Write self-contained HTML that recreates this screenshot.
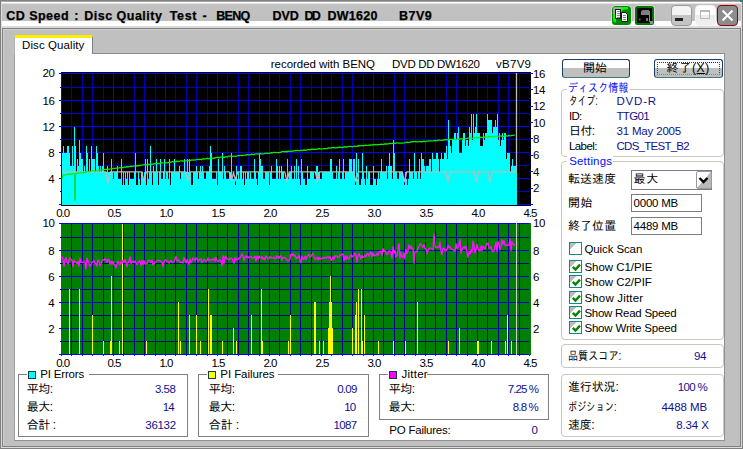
<!DOCTYPE html><html lang="ja"><head><meta charset="utf-8"><title>CD Speed : Disc Quality Test</title><style>
html,body{margin:0;padding:0;background:#c0c0c0;}
body{width:743px;height:449px;overflow:hidden;position:relative;font-family:"Liberation Sans","IPAGothic",sans-serif;font-size:11px;color:#000;}
#win{position:absolute;left:0;top:0;width:743px;height:449px;background:#c0c0c0;overflow:hidden;}
.abs{position:absolute;}
.t{position:absolute;white-space:pre;transform-origin:0 0;line-height:16px;height:16px;font-size:11.5px;}
.t.jp{font-size:12px;}
.t.tb{font-weight:bold;font-size:12.5px;-webkit-text-stroke:0.25px #000;}
.t.ax{font-size:11.5px;}
.t.val{color:#101090;}
.t.blue{color:#0010f0;}
.gb{position:absolute;border:1px solid #c8c8c0;border-radius:4px;box-sizing:border-box;}
.sb{position:absolute;border:1px solid #808080;box-sizing:border-box;}
.mask{position:absolute;background:#fff;}
.sq{position:absolute;width:6px;height:6px;border:1px solid #104040;}
.btn{position:absolute;box-sizing:border-box;border:1px solid #1c3c6c;border-bottom-color:#407878;border-radius:3px;background:linear-gradient(#fff 0,#fff 50%,#c0c0c0 50%,#c0c0c0 100%);}
.inp{position:absolute;box-sizing:border-box;border:1px solid #7c7c7c;background:#fff;}
.cb{position:absolute;width:13px;height:13px;box-sizing:border-box;border:1px solid #148888;background:linear-gradient(135deg,#bcbcbc 0,#bcbcbc 30%,#fff 31%);}
.cb svg{position:absolute;left:1px;top:1px;}
</style></head><body><div id="win">
<div class="abs" style="left:0;top:0;width:743px;height:449px;box-sizing:border-box;border:1px solid #808080;"></div>
<div class="abs" style="left:1px;top:1px;width:741px;height:447px;box-sizing:border-box;border:1px solid #dcdcdc;border-top-color:#a8a8a8;"></div>
<div class="abs" id="titlebar" style="left:2px;top:2px;width:739px;height:26px;background:linear-gradient(#fff 0,#fff 1px,#e4e4e4 1px,#e4e4e4 2px,#c2c2c2 2px,#c0c0c0 19px,#fff 19px,#fff 24px,#dadcda 24px,#dadcda 26px);"></div>
<div class="abs" style="left:2px;top:28px;width:739px;height:419px;box-sizing:border-box;border:1px solid #808080;background:#c0c0c0;"></div>
<div class="abs" style="left:3px;top:29px;width:737px;height:417px;box-sizing:border-box;border:1px solid #d0d0d0;border-right-color:#c0c0c0;border-bottom-color:#c0c0c0;"></div>
<svg class="abs" style="left:611px;top:5px" width="21" height="21" viewBox="0 0 21 21"><rect x="0.5" y="0.5" width="20" height="20" rx="4" fill="#f4f4f4"/><rect x="1" y="1" width="19" height="19" rx="3.5" fill="#008800"/><path d="M2,3.5 Q2,2 3.5,2 H17 L17,4 L12,5 L5,13 L5,18 L2,16 Z" fill="#10f010"/><path d="M2.5,2.500 H11 L11,4.500 H5 V9 H2.500 Z" fill="#a8a8a8"/><rect x="4.500" y="4.500" width="5" height="9" fill="#f0f0f0" stroke="#181818"/><path d="M6,6.500h3M6,8.500h3M6,10.500h3M6,12.500h3" stroke="#8a8a8a"/><path d="M10.500,7.500 H14.500 L16.500,9.500 V16.500 H10.500 Z" fill="#f4f4f4" stroke="#181818"/><path d="M12,10.500h3M12,12.500h3M12,14.500h3" stroke="#8a8a8a"/></svg>
<svg class="abs" style="left:634px;top:5px" width="21" height="21" viewBox="0 0 21 21"><rect x="0.5" y="0.5" width="20" height="20" rx="3" fill="#ececec"/><rect x="1" y="1" width="19" height="19" rx="2.5" fill="#007800"/><rect x="3" y="3" width="15" height="15" fill="#000"/><path d="M7,10 V7 Q7,5 9,5 H15 V10 Z" fill="#808080"/><path d="M15.500,6 V17" stroke="#8c8c8c"/><rect x="5" y="13.500" width="1.500" height="2" fill="#707070"/><rect x="12" y="13" width="2" height="3" fill="#787878"/><rect x="16" y="16" width="3" height="3" fill="#909090"/></svg>
<div class="abs" style="left:671px;top:5px;width:21px;height:21px;box-sizing:border-box;border:1px solid #9a9a9a;border-radius:4px;background:linear-gradient(#f4f4f4 0,#f4f4f4 45%,#c4c4c4 45%);"></div>
<div class="abs" style="left:675px;top:18px;width:8px;height:3px;background:#202020;"></div>
<div class="abs" style="left:695px;top:5px;width:21px;height:21px;box-sizing:border-box;border:1px solid #f4f4f4;border-radius:4px;background:linear-gradient(#fdfdfd 0,#fdfdfd 45%,#ebebeb 45%,#f0f0f0);"></div>
<div class="abs" style="left:700px;top:10px;width:10px;height:9px;box-sizing:border-box;border:1px solid #b8b8b8;border-top-width:2px;"></div>
<div class="abs" style="left:717px;top:5px;width:21px;height:21px;box-sizing:border-box;border:1px solid #900010;border-radius:4px;background:#8c8c8c;"></div>
<svg class="abs" style="left:717px;top:5px" width="21" height="21" viewBox="0 0 21 21"><path d="M5.500,5.500 L15.500,15.500 M15.500,5.500 L5.500,15.500" stroke="#fff" stroke-width="2"/></svg>
<div class="abs" style="left:740px;top:0;width:3px;height:2px;background:#208080;"></div>
<div class="abs" id="page" style="left:14px;top:53px;width:711px;height:388px;box-sizing:border-box;background:#fff;border:1px solid #909090;border-left-color:#a0a0a0;border-top-color:#8c8c8c;"></div>
<div class="abs" id="tab" style="left:14px;top:35px;width:79px;height:19px;box-sizing:border-box;background:#fff;border-left:1px solid #b0b0b0;border-right:1px solid #808080;border-top:3px solid #ffee00;border-radius:2px 2px 0 0;"></div>
<svg id="charts" width="743" height="449" viewBox="0 0 743 449" style="position:absolute;left:0;top:0">
<g shape-rendering="crispEdges">
<rect x="61" y="72" width="470" height="133" fill="#000"/>
<rect x="61" y="73" width="1" height="132" fill="#0000ff"/>
<rect x="71" y="73" width="1" height="132" fill="#0000b0"/>
<rect x="82" y="73" width="1" height="132" fill="#0000b0"/>
<rect x="92" y="73" width="1" height="132" fill="#0000b0"/>
<rect x="103" y="73" width="1" height="132" fill="#0000b0"/>
<rect x="113" y="73" width="1" height="132" fill="#0000ff"/>
<rect x="123" y="73" width="1" height="132" fill="#0000b0"/>
<rect x="134" y="73" width="1" height="132" fill="#0000b0"/>
<rect x="144" y="73" width="1" height="132" fill="#0000b0"/>
<rect x="155" y="73" width="1" height="132" fill="#0000b0"/>
<rect x="165" y="73" width="1" height="132" fill="#0000ff"/>
<rect x="175" y="73" width="1" height="132" fill="#0000b0"/>
<rect x="186" y="73" width="1" height="132" fill="#0000b0"/>
<rect x="196" y="73" width="1" height="132" fill="#0000b0"/>
<rect x="207" y="73" width="1" height="132" fill="#0000b0"/>
<rect x="217" y="73" width="1" height="132" fill="#0000ff"/>
<rect x="227" y="73" width="1" height="132" fill="#0000b0"/>
<rect x="238" y="73" width="1" height="132" fill="#0000b0"/>
<rect x="248" y="73" width="1" height="132" fill="#0000b0"/>
<rect x="259" y="73" width="1" height="132" fill="#0000b0"/>
<rect x="269" y="73" width="1" height="132" fill="#0000ff"/>
<rect x="279" y="73" width="1" height="132" fill="#0000b0"/>
<rect x="290" y="73" width="1" height="132" fill="#0000b0"/>
<rect x="300" y="73" width="1" height="132" fill="#0000b0"/>
<rect x="311" y="73" width="1" height="132" fill="#0000b0"/>
<rect x="321" y="73" width="1" height="132" fill="#0000ff"/>
<rect x="331" y="73" width="1" height="132" fill="#0000b0"/>
<rect x="342" y="73" width="1" height="132" fill="#0000b0"/>
<rect x="352" y="73" width="1" height="132" fill="#0000b0"/>
<rect x="363" y="73" width="1" height="132" fill="#0000b0"/>
<rect x="373" y="73" width="1" height="132" fill="#0000ff"/>
<rect x="383" y="73" width="1" height="132" fill="#0000b0"/>
<rect x="394" y="73" width="1" height="132" fill="#0000b0"/>
<rect x="404" y="73" width="1" height="132" fill="#0000b0"/>
<rect x="415" y="73" width="1" height="132" fill="#0000b0"/>
<rect x="425" y="73" width="1" height="132" fill="#0000ff"/>
<rect x="435" y="73" width="1" height="132" fill="#0000b0"/>
<rect x="446" y="73" width="1" height="132" fill="#0000b0"/>
<rect x="456" y="73" width="1" height="132" fill="#0000b0"/>
<rect x="467" y="73" width="1" height="132" fill="#0000b0"/>
<rect x="477" y="73" width="1" height="132" fill="#0000ff"/>
<rect x="487" y="73" width="1" height="132" fill="#0000b0"/>
<rect x="498" y="73" width="1" height="132" fill="#0000b0"/>
<rect x="508" y="73" width="1" height="132" fill="#0000b0"/>
<rect x="519" y="73" width="1" height="132" fill="#0000b0"/>
<rect x="59" y="204" width="470" height="1" fill="#0000ff"/>
<rect x="60" y="191" width="469" height="1" fill="#0000c8"/>
<rect x="59" y="178" width="470" height="1" fill="#0000ff"/>
<rect x="60" y="165" width="469" height="1" fill="#0000c8"/>
<rect x="59" y="152" width="470" height="1" fill="#0000ff"/>
<rect x="60" y="139" width="469" height="1" fill="#0000c8"/>
<rect x="59" y="126" width="470" height="1" fill="#0000ff"/>
<rect x="60" y="113" width="469" height="1" fill="#0000c8"/>
<rect x="59" y="100" width="470" height="1" fill="#0000ff"/>
<rect x="60" y="87" width="469" height="1" fill="#0000c8"/>
<rect x="59" y="73" width="470" height="1" fill="#0000ff"/>
<rect x="529" y="204" width="4" height="1" fill="#0000ff"/>
<rect x="529" y="196" width="2" height="1" fill="#0000ff"/>
<rect x="529" y="188" width="4" height="1" fill="#0000ff"/>
<rect x="529" y="179" width="2" height="1" fill="#0000ff"/>
<rect x="529" y="171" width="4" height="1" fill="#0000ff"/>
<rect x="529" y="163" width="2" height="1" fill="#0000ff"/>
<rect x="529" y="155" width="4" height="1" fill="#0000ff"/>
<rect x="529" y="147" width="2" height="1" fill="#0000ff"/>
<rect x="529" y="138" width="4" height="1" fill="#0000ff"/>
<rect x="529" y="130" width="2" height="1" fill="#0000ff"/>
<rect x="529" y="122" width="4" height="1" fill="#0000ff"/>
<rect x="529" y="114" width="2" height="1" fill="#0000ff"/>
<rect x="529" y="106" width="4" height="1" fill="#0000ff"/>
<rect x="529" y="98" width="2" height="1" fill="#0000ff"/>
<rect x="529" y="89" width="4" height="1" fill="#0000ff"/>
<rect x="529" y="81" width="2" height="1" fill="#0000ff"/>
<rect x="529" y="73" width="4" height="1" fill="#0000ff"/>
<path d="M62,204.5V152.5h1V146.0h1V152.5h1V152.5h1V152.5h1V146.0h1V146.0h1V152.5h1V165.5h1V165.5h1V146.0h1V165.5h1V126.5h1V146.0h1V172.0h1V159.0h1V165.5h1V139.5h1V152.5h1V159.0h1V159.0h1V172.0h1V165.5h1V172.0h1V146.0h1V152.5h1V172.0h1V159.0h1V172.0h1V146.0h1V159.0h1V159.0h1V159.0h1V172.0h1V146.0h1V152.5h1V165.5h1V172.0h1V165.5h1V172.0h1V165.5h1V152.5h1V172.0h1V172.0h1V172.0h1V165.5h1V172.0h1V172.0h1V172.0h1V159.0h1V172.0h1V178.5h1V172.0h1V172.0h1V172.0h1V165.5h1V178.5h1V178.5h1V178.5h1V159.0h1V185.0h1V172.0h1V185.0h1V172.0h1V178.5h1V172.0h1V185.0h1V172.0h1V178.5h1V178.5h1V178.5h1V178.5h1V172.0h1V152.5h1V185.0h1V185.0h1V172.0h1V178.5h1V185.0h1V172.0h1V172.0h1V178.5h1V172.0h1V159.0h1V185.0h1V159.0h1V178.5h1V172.0h1V146.0h1V172.0h1V185.0h1V165.5h1V172.0h1V172.0h1V159.0h1V172.0h1V185.0h1V172.0h1V159.0h1V178.5h1V178.5h1V172.0h1V159.0h1V178.5h1V172.0h1V172.0h1V178.5h1V159.0h1V185.0h1V172.0h1V172.0h1V172.0h1V159.0h1V172.0h1V172.0h1V172.0h1V172.0h1V165.5h1V178.5h1V172.0h1V172.0h1V172.0h1V159.0h1V172.0h1V172.0h1V159.0h1V172.0h1V159.0h1V172.0h1V185.0h1V185.0h1V172.0h1V172.0h1V172.0h1V165.5h1V172.0h1V178.5h1V172.0h1V165.5h1V172.0h1V165.5h1V172.0h1V178.5h1V178.5h1V172.0h1V172.0h1V172.0h1V165.5h1V146.0h1V152.5h1V178.5h1V178.5h1V178.5h1V178.5h1V172.0h1V185.0h1V159.0h1V172.0h1V172.0h1V172.0h1V152.5h1V178.5h1V165.5h1V172.0h1V178.5h1V178.5h1V178.5h1V172.0h1V172.0h1V152.5h1V178.5h1V178.5h1V178.5h1V185.0h1V165.5h1V178.5h1V172.0h1V178.5h1V165.5h1V165.5h1V178.5h1V172.0h1V185.0h1V172.0h1V178.5h1V172.0h1V172.0h1V178.5h1V172.0h1V178.5h1V178.5h1V178.5h1V159.0h1V172.0h1V178.5h1V185.0h1V172.0h1V152.5h1V159.0h1V165.5h1V165.5h1V178.5h1V178.5h1V172.0h1V172.0h1V172.0h1V172.0h1V185.0h1V172.0h1V165.5h1V178.5h1V178.5h1V178.5h1V178.5h1V159.0h1V165.5h1V178.5h1V165.5h1V178.5h1V165.5h1V172.0h1V172.0h1V178.5h1V178.5h1V178.5h1V159.0h1V178.5h1V172.0h1V172.0h1V165.5h1V178.5h1V178.5h1V165.5h1V178.5h1V159.0h1V178.5h1V165.5h1V178.5h1V185.0h1V159.0h1V172.0h1V178.5h1V178.5h1V185.0h1V185.0h1V165.5h1V178.5h1V178.5h1V172.0h1V172.0h1V172.0h1V172.0h1V178.5h1V178.5h1V165.5h1V165.5h1V172.0h1V172.0h1V178.5h1V178.5h1V172.0h1V172.0h1V172.0h1V172.0h1V172.0h1V172.0h1V172.0h1V172.0h1V159.0h1V159.0h1V172.0h1V178.5h1V178.5h1V178.5h1V165.5h1V178.5h1V172.0h1V159.0h1V178.5h1V178.5h1V172.0h1V159.0h1V178.5h1V172.0h1V172.0h1V172.0h1V172.0h1V159.0h1V159.0h1V159.0h1V172.0h1V159.0h1V159.0h1V185.0h1V152.5h1V178.5h1V159.0h1V185.0h1V185.0h1V178.5h1V152.5h1V172.0h1V178.5h1V185.0h1V165.5h1V178.5h1V172.0h1V172.0h1V185.0h1V185.0h1V185.0h1V165.5h1V178.5h1V178.5h1V185.0h1V178.5h1V172.0h1V178.5h1V172.0h1V159.0h1V172.0h1V172.0h1V172.0h1V172.0h1V165.5h1V178.5h1V165.5h1V152.5h1V165.5h1V165.5h1V178.5h1V139.5h1V152.5h1V172.0h1V172.0h1V178.5h1V178.5h1V172.0h1V172.0h1V172.0h1V172.0h1V178.5h1V185.0h1V172.0h1V178.5h1V185.0h1V178.5h1V159.0h1V172.0h1V172.0h1V172.0h1V178.5h1V152.5h1V172.0h1V172.0h1V178.5h1V172.0h1V159.0h1V178.5h1V152.5h1V159.0h1V159.0h1V165.5h1V172.0h1V165.5h1V165.5h1V165.5h1V159.0h1V159.0h1V172.0h1V152.5h1V159.0h1V159.0h1V159.0h1V152.5h1V152.5h1V159.0h1V172.0h1V159.0h1V152.5h1V159.0h1V159.0h1V152.5h1V152.5h1V146.0h1V159.0h1V120.0h1V139.5h1V146.0h1V152.5h1V139.5h1V139.5h1V133.0h1V133.0h1V139.5h1V133.0h1V126.5h1V152.5h1V152.5h1V152.5h1V139.5h1V133.0h1V133.0h1V146.0h1V139.5h1V139.5h1V146.0h1V126.5h1V133.0h1V113.5h1V139.5h1V113.5h1V133.0h1V126.5h1V113.5h1V133.0h1V133.0h1V133.0h1V146.0h1V146.0h1V146.0h1V133.0h1V139.5h1V133.0h1V133.0h1V113.5h1V120.0h1V120.0h1V120.0h1V120.0h1V133.0h1V126.5h1V126.5h1V120.0h1V126.5h1V113.5h1V139.5h1V133.0h1V146.0h1V139.5h1V133.0h1V139.5h1V133.0h1V133.0h1V159.0h1V152.5h1V152.5h1V152.5h1V172.0h1V165.5h1V159.0h1V165.5h1V165.5h1V165.5h1V165.5h1V204.5Z" fill="#00ffff"/>
</g>
<path d="M62,171.8 L105.8,171.8 L108,183.2 L110.2,171.8 L141.8,171.8 L144,181.8 L146.2,171.8 L185.8,171.8 L188,180.8 L190.2,171.8 L229.3,171.8 L231.5,180.8 L233.7,171.8 L233.3,171.8 L235.5,179.8 L237.7,171.8 L284.8,171.8 L287,181.8 L289.2,171.8 L315.3,171.8 L317.5,181.8 L319.7,171.8 L353.8,171.8 L356,182.2 L358.2,171.8 L402.3,171.8 L404.5,182.2 L406.7,171.8 L445.8,171.8 L448,182.2 L450.2,171.8 L474.3,171.8 L476.5,182.2 L478.7,171.8 L487.8,171.8 L490,182.2 L492.2,171.8 L516.5,171.8 L516.5,73" fill="none" stroke="#bcbcbc" stroke-width="1.3"/>
<path d="M62,178.7 L63,175.4 L64,174.7 L65,175.2 L66,174.7 L67,174.5 L68,174.2 L69,174.3 L70,173.9 L71,174.4 L72,173.8 L73,173.4 L74,174.0 L75,173.9 L76,173.3 L77,173.3 L78,172.9 L79,173.2 L80,172.8 L81,172.5 L82,172.7 L83,172.7 L84,172.6 L85,172.4 L86,172.2 L87,171.7 L88,171.7 L89,171.6 L90,171.6 L91,171.1 L92,170.9 L93,170.7 L94,171.0 L95,171.1 L96,171.0 L97,170.9 L98,170.5 L99,170.0 L100,170.1 L101,169.8 L102,170.0 L103,169.6 L104,169.8 L105,169.3 L106,169.7 L107,169.1 L108,169.4 L109,169.0 L110,169.0 L111,168.9 L112,168.5 L113,168.6 L114,168.3 L115,168.5 L116,168.1 L117,168.1 L118,168.1 L119,167.9 L120,167.5 L121,168.0 L122,167.7 L123,167.7 L124,167.2 L125,167.2 L126,167.1 L127,166.5 L128,167.2 L129,166.5 L130,166.4 L131,166.1 L132,166.5 L133,166.0 L134,166.0 L135,165.7 L136,165.5 L137,166.1 L138,165.4 L139,165.9 L140,165.2 L141,165.3 L142,165.0 L143,164.9 L144,164.6 L145,164.6 L146,165.1 L147,164.7 L148,164.9 L149,164.1 L150,164.5 L151,164.1 L152,164.4 L153,164.2 L154,163.6 L155,163.8 L156,163.4 L157,163.5 L158,163.5 L159,163.5 L160,163.5 L161,163.2 L162,162.9 L163,163.0 L164,162.8 L165,163.0 L166,162.7 L167,162.8 L168,162.8 L169,162.2 L170,162.5 L171,162.2 L172,161.6 L173,161.5 L174,162.1 L175,162.0 L176,161.6 L177,161.2 L178,161.6 L179,161.3 L180,161.0 L181,160.9 L182,160.8 L183,161.1 L184,161.0 L185,160.9 L186,160.8 L187,160.7 L188,160.5 L189,160.6 L190,160.4 L191,160.3 L192,159.7 L193,160.2 L194,160.2 L195,159.9 L196,159.8 L197,159.5 L198,159.3 L199,159.7 L200,159.3 L201,159.5 L202,159.5 L203,158.6 L204,159.1 L205,158.8 L206,158.8 L207,158.3 L208,158.7 L209,158.8 L210,158.2 L211,157.9 L212,158.4 L213,158.4 L214,157.9 L215,158.1 L216,157.6 L217,157.4 L218,157.4 L219,157.9 L220,157.2 L221,157.1 L222,157.3 L223,157.5 L224,157.1 L225,157.3 L226,156.4 L227,157.1 L228,156.4 L229,156.2 L230,156.2 L231,156.1 L232,156.3 L233,156.3 L234,156.0 L235,156.3 L236,156.3 L237,155.8 L238,155.7 L239,155.7 L240,155.3 L241,155.3 L242,155.7 L243,155.3 L244,155.1 L245,155.2 L246,155.2 L247,154.5 L248,154.7 L249,154.8 L250,155.0 L251,154.4 L252,154.2 L253,154.5 L254,154.7 L255,154.0 L256,153.9 L257,153.9 L258,154.1 L259,154.0 L260,153.4 L261,153.8 L262,153.9 L263,153.9 L264,153.8 L265,153.3 L266,153.4 L267,153.0 L268,153.4 L269,153.4 L270,153.2 L271,152.6 L272,152.9 L273,152.6 L274,152.3 L275,152.3 L276,152.7 L277,152.5 L278,152.6 L279,152.5 L280,152.5 L281,152.1 L282,151.7 L283,151.6 L284,151.5 L285,151.9 L286,151.3 L287,151.9 L288,151.1 L289,151.5 L290,151.2 L291,151.1 L292,151.5 L293,150.9 L294,150.8 L295,150.6 L296,150.7 L297,150.4 L298,150.5 L299,150.5 L300,150.7 L301,150.4 L302,150.3 L303,150.6 L304,149.8 L305,150.4 L306,150.1 L307,150.2 L308,149.5 L309,149.5 L310,149.9 L311,149.3 L312,149.2 L313,149.3 L314,149.2 L315,149.4 L316,149.3 L317,149.2 L318,148.8 L319,148.7 L320,148.8 L321,149.0 L322,148.9 L323,148.8 L324,148.7 L325,148.5 L326,148.7 L327,148.8 L328,147.9 L329,148.2 L330,148.2 L331,147.9 L332,147.7 L333,147.6 L334,147.6 L335,147.8 L336,148.0 L337,147.7 L338,147.6 L339,147.2 L340,147.4 L341,147.2 L342,147.6 L343,147.4 L344,146.7 L345,147.1 L346,146.7 L347,147.2 L348,146.5 L349,146.4 L350,146.5 L351,146.3 L352,146.8 L353,146.7 L354,146.2 L355,146.1 L356,146.5 L357,146.4 L358,145.7 L359,146.1 L360,145.6 L361,145.5 L362,145.6 L363,145.5 L364,145.8 L365,145.2 L366,145.3 L367,145.5 L368,145.4 L369,145.1 L370,144.8 L371,145.1 L372,145.2 L373,144.5 L374,144.8 L375,144.7 L376,144.6 L377,144.8 L378,144.6 L379,144.7 L380,144.5 L381,144.2 L382,144.4 L383,144.3 L384,144.2 L385,143.8 L386,144.2 L387,143.7 L388,144.2 L389,143.4 L390,143.3 L391,143.6 L392,143.5 L393,143.3 L394,143.1 L395,143.5 L396,143.2 L397,142.9 L398,142.9 L399,143.1 L400,143.1 L401,143.0 L402,143.1 L403,142.9 L404,143.0 L405,142.8 L406,142.4 L407,142.1 L408,142.6 L409,142.3 L410,142.4 L411,141.8 L412,141.8 L413,141.7 L414,141.7 L415,141.7 L416,141.6 L417,142.0 L418,141.9 L419,141.5 L420,141.6 L421,141.6 L422,141.8 L423,141.4 L424,141.2 L425,141.6 L426,141.5 L427,141.0 L428,141.2 L429,140.9 L430,140.9 L431,140.9 L432,140.9 L433,141.0 L434,140.7 L435,140.3 L436,140.7 L437,140.8 L438,140.1 L439,140.1 L440,140.2 L441,140.5 L442,140.4 L443,139.9 L444,140.1 L445,139.6 L446,139.4 L447,140.1 L448,139.4 L449,139.3 L450,139.4 L451,139.4 L452,139.3 L453,139.3 L454,139.3 L455,139.5 L456,139.5 L457,139.4 L458,139.4 L459,139.2 L460,139.1 L461,138.5 L462,139.1 L463,138.6 L464,138.5 L465,138.8 L466,138.5 L467,138.4 L468,138.2 L469,138.1 L470,138.3 L471,138.0 L472,138.1 L473,138.4 L474,137.8 L475,137.5 L476,137.6 L477,137.8 L478,137.6 L479,137.7 L480,137.6 L481,137.1 L482,137.8 L483,137.2 L484,137.6 L485,136.8 L486,137.4 L487,137.0 L488,137.3 L489,136.6 L490,136.6 L491,136.5 L492,137.0 L493,137.1 L494,136.5 L495,136.4 L496,136.4 L497,136.1 L498,136.0 L499,136.5 L500,135.9 L501,135.9 L502,136.5 L503,136.1 L504,136.3 L505,135.6 L506,135.6 L507,136.1 L508,136.0 L509,135.4 L510,135.9 L511,135.7 L512,135.4 L513,135.5 L514,135.1 L515,135.0" fill="none" stroke="#08f000" stroke-width="1.25" stroke-linejoin="round"/>
<path d="M75,174 V200.7" fill="none" stroke="#00dd00" stroke-width="1.5"/>
<g shape-rendering="crispEdges">
<rect x="61" y="223" width="470" height="132" fill="#008000"/>
<rect x="71" y="223" width="1" height="132" fill="#000088"/>
<rect x="82" y="223" width="1" height="132" fill="#000088"/>
<rect x="92" y="223" width="1" height="132" fill="#000088"/>
<rect x="103" y="223" width="1" height="132" fill="#000088"/>
<rect x="113" y="223" width="1" height="132" fill="#0000e0"/>
<rect x="123" y="223" width="1" height="132" fill="#000088"/>
<rect x="134" y="223" width="1" height="132" fill="#000088"/>
<rect x="144" y="223" width="1" height="132" fill="#000088"/>
<rect x="155" y="223" width="1" height="132" fill="#000088"/>
<rect x="165" y="223" width="1" height="132" fill="#0000e0"/>
<rect x="175" y="223" width="1" height="132" fill="#000088"/>
<rect x="186" y="223" width="1" height="132" fill="#000088"/>
<rect x="196" y="223" width="1" height="132" fill="#000088"/>
<rect x="207" y="223" width="1" height="132" fill="#000088"/>
<rect x="217" y="223" width="1" height="132" fill="#0000e0"/>
<rect x="227" y="223" width="1" height="132" fill="#000088"/>
<rect x="238" y="223" width="1" height="132" fill="#000088"/>
<rect x="248" y="223" width="1" height="132" fill="#000088"/>
<rect x="259" y="223" width="1" height="132" fill="#000088"/>
<rect x="269" y="223" width="1" height="132" fill="#0000e0"/>
<rect x="279" y="223" width="1" height="132" fill="#000088"/>
<rect x="290" y="223" width="1" height="132" fill="#000088"/>
<rect x="300" y="223" width="1" height="132" fill="#000088"/>
<rect x="311" y="223" width="1" height="132" fill="#000088"/>
<rect x="321" y="223" width="1" height="132" fill="#0000e0"/>
<rect x="331" y="223" width="1" height="132" fill="#000088"/>
<rect x="342" y="223" width="1" height="132" fill="#000088"/>
<rect x="352" y="223" width="1" height="132" fill="#000088"/>
<rect x="363" y="223" width="1" height="132" fill="#000088"/>
<rect x="373" y="223" width="1" height="132" fill="#0000e0"/>
<rect x="383" y="223" width="1" height="132" fill="#000088"/>
<rect x="394" y="223" width="1" height="132" fill="#000088"/>
<rect x="404" y="223" width="1" height="132" fill="#000088"/>
<rect x="415" y="223" width="1" height="132" fill="#000088"/>
<rect x="425" y="223" width="1" height="132" fill="#0000e0"/>
<rect x="435" y="223" width="1" height="132" fill="#000088"/>
<rect x="446" y="223" width="1" height="132" fill="#000088"/>
<rect x="456" y="223" width="1" height="132" fill="#000088"/>
<rect x="467" y="223" width="1" height="132" fill="#000088"/>
<rect x="477" y="223" width="1" height="132" fill="#0000e0"/>
<rect x="487" y="223" width="1" height="132" fill="#000088"/>
<rect x="498" y="223" width="1" height="132" fill="#000088"/>
<rect x="508" y="223" width="1" height="132" fill="#000088"/>
<rect x="519" y="223" width="1" height="132" fill="#000088"/>
<rect x="59" y="354" width="470" height="1" fill="#0000ff"/>
<rect x="60" y="341" width="469" height="1" fill="#000090"/>
<rect x="59" y="328" width="470" height="1" fill="#0000e8"/>
<rect x="60" y="315" width="469" height="1" fill="#000090"/>
<rect x="59" y="302" width="470" height="1" fill="#0000e8"/>
<rect x="60" y="289" width="469" height="1" fill="#000090"/>
<rect x="59" y="276" width="470" height="1" fill="#0000e8"/>
<rect x="60" y="263" width="469" height="1" fill="#000090"/>
<rect x="59" y="250" width="470" height="1" fill="#0000e8"/>
<rect x="60" y="237" width="469" height="1" fill="#000090"/>
<rect x="59" y="223" width="470" height="1" fill="#0000ff"/>
<rect x="61" y="205" width="470" height="1" fill="#000"/>
<rect x="61" y="205" width="1" height="1" fill="#000070"/>
<rect x="61" y="355" width="1" height="1" fill="#2020ff"/>
<rect x="71" y="205" width="1" height="1" fill="#000070"/>
<rect x="71" y="355" width="1" height="1" fill="#2020ff"/>
<rect x="82" y="205" width="1" height="1" fill="#000070"/>
<rect x="82" y="355" width="1" height="1" fill="#2020ff"/>
<rect x="92" y="205" width="1" height="1" fill="#000070"/>
<rect x="92" y="355" width="1" height="1" fill="#2020ff"/>
<rect x="103" y="205" width="1" height="1" fill="#000070"/>
<rect x="103" y="355" width="1" height="1" fill="#2020ff"/>
<rect x="113" y="205" width="1" height="1" fill="#000070"/>
<rect x="113" y="355" width="1" height="1" fill="#2020ff"/>
<rect x="123" y="205" width="1" height="1" fill="#000070"/>
<rect x="123" y="355" width="1" height="1" fill="#2020ff"/>
<rect x="134" y="205" width="1" height="1" fill="#000070"/>
<rect x="134" y="355" width="1" height="1" fill="#2020ff"/>
<rect x="144" y="205" width="1" height="1" fill="#000070"/>
<rect x="144" y="355" width="1" height="1" fill="#2020ff"/>
<rect x="155" y="205" width="1" height="1" fill="#000070"/>
<rect x="155" y="355" width="1" height="1" fill="#2020ff"/>
<rect x="165" y="205" width="1" height="1" fill="#000070"/>
<rect x="165" y="355" width="1" height="1" fill="#2020ff"/>
<rect x="175" y="205" width="1" height="1" fill="#000070"/>
<rect x="175" y="355" width="1" height="1" fill="#2020ff"/>
<rect x="186" y="205" width="1" height="1" fill="#000070"/>
<rect x="186" y="355" width="1" height="1" fill="#2020ff"/>
<rect x="196" y="205" width="1" height="1" fill="#000070"/>
<rect x="196" y="355" width="1" height="1" fill="#2020ff"/>
<rect x="207" y="205" width="1" height="1" fill="#000070"/>
<rect x="207" y="355" width="1" height="1" fill="#2020ff"/>
<rect x="217" y="205" width="1" height="1" fill="#000070"/>
<rect x="217" y="355" width="1" height="1" fill="#2020ff"/>
<rect x="227" y="205" width="1" height="1" fill="#000070"/>
<rect x="227" y="355" width="1" height="1" fill="#2020ff"/>
<rect x="238" y="205" width="1" height="1" fill="#000070"/>
<rect x="238" y="355" width="1" height="1" fill="#2020ff"/>
<rect x="248" y="205" width="1" height="1" fill="#000070"/>
<rect x="248" y="355" width="1" height="1" fill="#2020ff"/>
<rect x="259" y="205" width="1" height="1" fill="#000070"/>
<rect x="259" y="355" width="1" height="1" fill="#2020ff"/>
<rect x="269" y="205" width="1" height="1" fill="#000070"/>
<rect x="269" y="355" width="1" height="1" fill="#2020ff"/>
<rect x="279" y="205" width="1" height="1" fill="#000070"/>
<rect x="279" y="355" width="1" height="1" fill="#2020ff"/>
<rect x="290" y="205" width="1" height="1" fill="#000070"/>
<rect x="290" y="355" width="1" height="1" fill="#2020ff"/>
<rect x="300" y="205" width="1" height="1" fill="#000070"/>
<rect x="300" y="355" width="1" height="1" fill="#2020ff"/>
<rect x="311" y="205" width="1" height="1" fill="#000070"/>
<rect x="311" y="355" width="1" height="1" fill="#2020ff"/>
<rect x="321" y="205" width="1" height="1" fill="#000070"/>
<rect x="321" y="355" width="1" height="1" fill="#2020ff"/>
<rect x="331" y="205" width="1" height="1" fill="#000070"/>
<rect x="331" y="355" width="1" height="1" fill="#2020ff"/>
<rect x="342" y="205" width="1" height="1" fill="#000070"/>
<rect x="342" y="355" width="1" height="1" fill="#2020ff"/>
<rect x="352" y="205" width="1" height="1" fill="#000070"/>
<rect x="352" y="355" width="1" height="1" fill="#2020ff"/>
<rect x="363" y="205" width="1" height="1" fill="#000070"/>
<rect x="363" y="355" width="1" height="1" fill="#2020ff"/>
<rect x="373" y="205" width="1" height="1" fill="#000070"/>
<rect x="373" y="355" width="1" height="1" fill="#2020ff"/>
<rect x="383" y="205" width="1" height="1" fill="#000070"/>
<rect x="383" y="355" width="1" height="1" fill="#2020ff"/>
<rect x="394" y="205" width="1" height="1" fill="#000070"/>
<rect x="394" y="355" width="1" height="1" fill="#2020ff"/>
<rect x="404" y="205" width="1" height="1" fill="#000070"/>
<rect x="404" y="355" width="1" height="1" fill="#2020ff"/>
<rect x="415" y="205" width="1" height="1" fill="#000070"/>
<rect x="415" y="355" width="1" height="1" fill="#2020ff"/>
<rect x="425" y="205" width="1" height="1" fill="#000070"/>
<rect x="425" y="355" width="1" height="1" fill="#2020ff"/>
<rect x="435" y="205" width="1" height="1" fill="#000070"/>
<rect x="435" y="355" width="1" height="1" fill="#2020ff"/>
<rect x="446" y="205" width="1" height="1" fill="#000070"/>
<rect x="446" y="355" width="1" height="1" fill="#2020ff"/>
<rect x="456" y="205" width="1" height="1" fill="#000070"/>
<rect x="456" y="355" width="1" height="1" fill="#2020ff"/>
<rect x="467" y="205" width="1" height="1" fill="#000070"/>
<rect x="467" y="355" width="1" height="1" fill="#2020ff"/>
<rect x="477" y="205" width="1" height="1" fill="#000070"/>
<rect x="477" y="355" width="1" height="1" fill="#2020ff"/>
<rect x="487" y="205" width="1" height="1" fill="#000070"/>
<rect x="487" y="355" width="1" height="1" fill="#2020ff"/>
<rect x="498" y="205" width="1" height="1" fill="#000070"/>
<rect x="498" y="355" width="1" height="1" fill="#2020ff"/>
<rect x="508" y="205" width="1" height="1" fill="#000070"/>
<rect x="508" y="355" width="1" height="1" fill="#2020ff"/>
<rect x="519" y="205" width="1" height="1" fill="#000070"/>
<rect x="519" y="355" width="1" height="1" fill="#2020ff"/>
<rect x="529" y="205" width="1" height="1" fill="#000070"/>
<rect x="529" y="355" width="1" height="1" fill="#2020ff"/>
<rect x="69" y="289.0" width="1" height="65.0" fill="#ffff00"/>
<rect x="79" y="289.0" width="1" height="65.0" fill="#ffff00"/>
<rect x="92" y="315.0" width="1" height="39.0" fill="#ffff00"/>
<rect x="103" y="341.0" width="1" height="13.0" fill="#ffff00"/>
<rect x="110" y="341.0" width="2" height="13.0" fill="#ffff00"/>
<rect x="111" y="276.0" width="1" height="78.0" fill="#ffff00"/>
<rect x="119" y="341.0" width="1" height="13.0" fill="#ffff00"/>
<rect x="122" y="224.0" width="1" height="130.0" fill="#ffff00"/>
<rect x="146" y="341.0" width="1" height="13.0" fill="#ffff00"/>
<rect x="178" y="302.0" width="1" height="52.0" fill="#ffff00"/>
<rect x="180" y="341.0" width="1" height="13.0" fill="#ffff00"/>
<rect x="189" y="315.0" width="1" height="39.0" fill="#ffff00"/>
<rect x="196" y="315.0" width="1" height="39.0" fill="#ffff00"/>
<rect x="200" y="341.0" width="1" height="13.0" fill="#ffff00"/>
<rect x="208" y="289.0" width="1" height="65.0" fill="#ffff00"/>
<rect x="210" y="315.0" width="2" height="39.0" fill="#ffff00"/>
<rect x="222" y="341.0" width="1" height="13.0" fill="#ffff00"/>
<rect x="233" y="328.0" width="1" height="26.0" fill="#ffff00"/>
<rect x="236" y="341.0" width="1" height="13.0" fill="#ffff00"/>
<rect x="251" y="315.0" width="1" height="39.0" fill="#ffff00"/>
<rect x="261" y="289.0" width="1" height="65.0" fill="#ffff00"/>
<rect x="262" y="341.0" width="1" height="13.0" fill="#ffff00"/>
<rect x="288" y="341.0" width="1" height="13.0" fill="#ffff00"/>
<rect x="290" y="315.0" width="1" height="39.0" fill="#ffff00"/>
<rect x="314" y="302.0" width="2" height="52.0" fill="#ffff00"/>
<rect x="319" y="341.0" width="1" height="13.0" fill="#ffff00"/>
<rect x="323" y="341.0" width="1" height="13.0" fill="#ffff00"/>
<rect x="328" y="328.0" width="1" height="26.0" fill="#ffff00"/>
<rect x="329" y="302.0" width="1" height="52.0" fill="#ffff00"/>
<rect x="330" y="276.0" width="1" height="78.0" fill="#ffff00"/>
<rect x="331" y="302.0" width="1" height="52.0" fill="#ffff00"/>
<rect x="332" y="328.0" width="1" height="26.0" fill="#ffff00"/>
<rect x="332" y="341.0" width="1" height="13.0" fill="#ffff00"/>
<rect x="352" y="328.0" width="1" height="26.0" fill="#ffff00"/>
<rect x="355" y="315.0" width="1" height="39.0" fill="#ffff00"/>
<rect x="356" y="302.0" width="1" height="52.0" fill="#ffff00"/>
<rect x="358" y="289.0" width="1" height="65.0" fill="#ffff00"/>
<rect x="361" y="289.0" width="1" height="65.0" fill="#ffff00"/>
<rect x="362" y="341.0" width="1" height="13.0" fill="#ffff00"/>
<rect x="364" y="315.0" width="1" height="39.0" fill="#ffff00"/>
<rect x="378" y="341.0" width="1" height="13.0" fill="#ffff00"/>
<rect x="393" y="341.0" width="1" height="13.0" fill="#ffff00"/>
<rect x="405" y="341.0" width="1" height="13.0" fill="#ffff00"/>
<rect x="417" y="302.0" width="1" height="52.0" fill="#ffff00"/>
<rect x="448" y="341.0" width="1" height="13.0" fill="#ffff00"/>
<rect x="459" y="328.0" width="1" height="26.0" fill="#ffff00"/>
<rect x="477" y="341.0" width="2" height="13.0" fill="#ffff00"/>
<rect x="491" y="341.0" width="1" height="13.0" fill="#ffff00"/>
<rect x="505" y="341.0" width="1" height="13.0" fill="#ffff00"/>
<rect x="507" y="315.0" width="1" height="39.0" fill="#ffff00"/>
<rect x="511" y="341.0" width="1" height="13.0" fill="#ffff00"/>
<rect x="516" y="223" width="1" height="132" fill="#d0d0d0"/>
</g>
<path d="M62,256.4 L63,260.0 L64,266.3 L65,259.8 L66,257.6 L67,261.9 L68,264.0 L69,260.5 L70,257.7 L71,259.4 L72,260.6 L73,266.7 L74,260.3 L75,261.6 L76,262.3 L77,263.6 L78,261.6 L79,266.2 L80,258.4 L81,262.4 L82,262.3 L83,262.5 L84,262.0 L85,262.3 L86,269.1 L87,258.2 L88,261.1 L89,263.7 L90,266.2 L91,264.6 L92,262.2 L93,261.6 L94,260.8 L95,263.8 L96,263.3 L97,266.2 L98,259.9 L99,260.7 L100,265.7 L101,264.5 L102,260.5 L103,259.6 L104,260.2 L105,258.8 L106,260.0 L107,262.3 L108,259.0 L109,260.0 L110,264.3 L111,261.1 L112,264.1 L113,261.3 L114,265.0 L115,265.2 L116,267.9 L117,264.3 L118,261.0 L119,263.6 L120,264.7 L121,261.6 L122,263.4 L123,260.1 L124,262.5 L125,259.4 L126,263.0 L127,266.7 L128,262.9 L129,261.2 L130,256.9 L131,263.7 L132,261.9 L133,261.3 L134,262.6 L135,260.9 L136,262.9 L137,264.7 L138,263.3 L139,261.7 L140,260.9 L141,265.5 L142,260.5 L143,264.2 L144,260.6 L145,264.0 L146,263.3 L147,263.6 L148,260.6 L149,260.5 L150,260.8 L151,262.5 L152,259.9 L153,264.8 L154,264.1 L155,261.8 L156,261.6 L157,261.2 L158,260.4 L159,260.6 L160,260.3 L161,261.6 L162,262.3 L163,266.6 L164,262.2 L165,260.0 L166,260.0 L167,261.1 L168,261.3 L169,263.3 L170,261.3 L171,260.4 L172,262.6 L173,262.6 L174,261.3 L175,259.1 L176,256.3 L177,260.8 L178,260.0 L179,260.8 L180,262.2 L181,262.5 L182,262.0 L183,263.1 L184,257.4 L185,260.3 L186,263.1 L187,259.6 L188,262.0 L189,264.5 L190,259.0 L191,262.8 L192,260.8 L193,258.1 L194,259.1 L195,260.4 L196,257.9 L197,258.6 L198,261.2 L199,259.9 L200,259.4 L201,258.9 L202,262.5 L203,261.1 L204,259.3 L205,260.6 L206,261.5 L207,261.1 L208,257.7 L209,260.6 L210,260.6 L211,259.3 L212,259.7 L213,260.1 L214,258.4 L215,261.0 L216,257.1 L217,260.7 L218,261.4 L219,260.8 L220,259.8 L221,261.0 L222,265.8 L223,255.7 L224,263.4 L225,257.2 L226,256.0 L227,259.0 L228,259.0 L229,259.9 L230,258.4 L231,258.4 L232,258.5 L233,261.0 L234,263.3 L235,257.8 L236,260.3 L237,258.7 L238,259.4 L239,257.8 L240,257.8 L241,256.2 L242,253.8 L243,255.7 L244,260.5 L245,257.4 L246,255.6 L247,257.7 L248,256.7 L249,257.8 L250,257.0 L251,256.5 L252,258.1 L253,258.2 L254,257.3 L255,256.2 L256,261.2 L257,256.1 L258,259.3 L259,255.8 L260,258.0 L261,258.2 L262,256.6 L263,259.3 L264,258.0 L265,259.9 L266,255.8 L267,257.1 L268,258.7 L269,258.9 L270,256.4 L271,257.1 L272,258.2 L273,257.9 L274,257.2 L275,258.9 L276,258.3 L277,255.8 L278,256.5 L279,258.6 L280,256.1 L281,255.6 L282,260.3 L283,257.8 L284,257.4 L285,257.6 L286,258.6 L287,259.9 L288,261.1 L289,260.2 L290,259.3 L291,253.9 L292,255.4 L293,253.8 L294,256.0 L295,255.0 L296,258.8 L297,257.1 L298,258.0 L299,255.2 L300,260.2 L301,262.7 L302,256.3 L303,259.4 L304,258.7 L305,256.3 L306,259.9 L307,256.6 L308,255.3 L309,254.2 L310,257.5 L311,256.4 L312,254.5 L313,253.6 L314,256.9 L315,259.2 L316,258.9 L317,257.1 L318,259.9 L319,257.3 L320,259.3 L321,258.2 L322,258.7 L323,257.5 L324,258.4 L325,257.3 L326,258.2 L327,257.1 L328,256.6 L329,258.3 L330,256.4 L331,260.2 L332,260.3 L333,256.7 L334,259.2 L335,256.0 L336,255.8 L337,256.0 L338,257.6 L339,257.2 L340,255.0 L341,255.4 L342,254.2 L343,254.0 L344,260.6 L345,256.0 L346,259.5 L347,255.9 L348,258.6 L349,259.0 L350,256.5 L351,254.9 L352,257.0 L353,255.9 L354,255.6 L355,253.1 L356,255.2 L357,262.1 L358,255.7 L359,253.6 L360,256.3 L361,258.8 L362,255.5 L363,257.6 L364,256.9 L365,255.0 L366,256.6 L367,253.9 L368,253.7 L369,256.3 L370,253.3 L371,252.3 L372,256.8 L373,252.7 L374,256.1 L375,255.3 L376,255.0 L377,253.3 L378,255.6 L379,251.8 L380,251.5 L381,251.3 L382,255.5 L383,248.4 L384,251.5 L385,250.5 L386,252.7 L387,254.7 L388,253.1 L389,250.9 L390,251.4 L391,253.2 L392,258.0 L393,246.7 L394,253.0 L395,250.6 L396,257.2 L397,255.9 L398,249.3 L399,243.4 L400,258.0 L401,252.7 L402,256.7 L403,257.6 L404,252.8 L405,258.8 L406,249.4 L407,253.3 L408,250.7 L409,244.8 L410,248.4 L411,246.1 L412,248.5 L413,248.2 L414,263.2 L415,252.2 L416,251.6 L417,251.8 L418,247.9 L419,246.5 L420,243.9 L421,243.9 L422,246.2 L423,247.3 L424,244.5 L425,248.1 L426,249.0 L427,253.5 L428,250.3 L429,248.8 L430,248.0 L431,248.2 L432,248.9 L433,249.8 L434,233.5 L435,245.3 L436,248.0 L437,247.4 L438,246.4 L439,247.5 L440,242.0 L441,251.2 L442,254.5 L443,248.5 L444,248.2 L445,250.6 L446,250.9 L447,249.0 L448,245.3 L449,247.6 L450,246.5 L451,249.0 L452,249.3 L453,249.7 L454,250.3 L455,251.4 L456,243.6 L457,248.6 L458,247.0 L459,244.2 L460,239.3 L461,253.2 L462,249.6 L463,247.7 L464,246.7 L465,248.5 L466,245.6 L467,252.3 L468,257.7 L469,251.1 L470,254.0 L471,249.8 L472,252.4 L473,241.2 L474,245.8 L475,253.1 L476,249.8 L477,244.1 L478,248.9 L479,250.6 L480,251.0 L481,245.9 L482,250.6 L483,246.2 L484,247.7 L485,248.9 L486,245.5 L487,243.4 L488,243.0 L489,248.1 L490,248.2 L491,246.6 L492,250.5 L493,251.8 L494,250.8 L495,246.1 L496,242.3 L497,251.6 L498,241.5 L499,243.7 L500,249.8 L501,245.8 L502,239.9 L503,244.4 L504,240.7 L505,245.2 L506,244.8 L507,245.4 L508,245.4 L509,245.1 L510,238.7 L511,250.8 L512,241.7 L513,243.3 L514,245.1 L515,244.4" fill="none" stroke="#ff10ff" stroke-width="1.35" stroke-linejoin="round"/>
</svg>
<div class="sb" style="left:18px;top:374px;width:170px;height:63px;"></div>
<div class="mask" style="left:27px;top:370px;width:62px;height:9px;"></div>
<div class="sq" style="left:28px;top:371px;background:#00ffff;"></div>
<div class="sb" style="left:198px;top:374px;width:171px;height:63px;"></div>
<div class="mask" style="left:207px;top:370px;width:71px;height:9px;"></div>
<div class="sq" style="left:208px;top:371px;background:#ffff00;"></div>
<div class="sb" style="left:379px;top:374px;width:170px;height:46px;"></div>
<div class="mask" style="left:388px;top:370px;width:39px;height:9px;"></div>
<div class="sq" style="left:389px;top:371px;background:#ff00ff;"></div>
<div class="btn" style="left:562px;top:59px;width:68px;height:19px;"></div>
<div class="btn" style="left:654px;top:59px;width:69px;height:19px;"></div>
<div class="abs" style="left:657px;top:62px;width:63px;height:13px;box-sizing:border-box;border:1px dotted #404040;border-top-color:#a00020;border-bottom-color:#909000;"></div>
<div class="gb" style="left:561px;top:89px;width:163px;height:68px;"></div>
<div class="mask" style="left:567px;top:84px;width:63px;height:10px;"></div>
<div class="gb" style="left:561px;top:161px;width:163px;height:179px;"></div>
<div class="mask" style="left:567px;top:156px;width:46px;height:10px;"></div>
<div class="gb" style="left:561px;top:344px;width:163px;height:24px;"></div>
<div class="gb" style="left:561px;top:374px;width:163px;height:63px;"></div>
<div class="inp" style="left:631px;top:170px;width:81px;height:20px;"></div>
<div class="abs" style="left:696px;top:171px;width:16px;height:18px;box-sizing:border-box;border:1px solid #9a9a9a;border-radius:2px;background:linear-gradient(to bottom right,#fff 0,#fff 48%,#b8b8b8 50%,#b8b8b8 100%);"></div>
<svg class="abs" style="left:696px;top:171px" width="15" height="18" viewBox="0 0 15 18"><path d="M3.5,7 L7.500,11 L11.5,7" fill="none" stroke="#000" stroke-width="2.4"/></svg>
<div class="inp" style="left:631px;top:194px;width:71px;height:18px;"></div>
<div class="inp" style="left:631px;top:217px;width:71px;height:18px;"></div>
<div class="cb" style="left:569px;top:242px"></div>
<div class="cb" style="left:569px;top:260px"><svg width="11" height="11" viewBox="0 0 11 11"><path d="M1.8,4.8 L4.5,7.5 L9,2.6" fill="none" stroke="#008800" stroke-width="2.4"/></svg></div>
<div class="cb" style="left:569px;top:275px"><svg width="11" height="11" viewBox="0 0 11 11"><path d="M1.8,4.8 L4.5,7.5 L9,2.6" fill="none" stroke="#008800" stroke-width="2.4"/></svg></div>
<div class="cb" style="left:569px;top:291px"><svg width="11" height="11" viewBox="0 0 11 11"><path d="M1.8,4.8 L4.5,7.5 L9,2.6" fill="none" stroke="#008800" stroke-width="2.4"/></svg></div>
<div class="cb" style="left:569px;top:306px"><svg width="11" height="11" viewBox="0 0 11 11"><path d="M1.8,4.8 L4.5,7.5 L9,2.6" fill="none" stroke="#008800" stroke-width="2.4"/></svg></div>
<div class="cb" style="left:569px;top:321px"><svg width="11" height="11" viewBox="0 0 11 11"><path d="M1.8,4.8 L4.5,7.5 L9,2.6" fill="none" stroke="#008800" stroke-width="2.4"/></svg></div>
<span class="t tb" id="t0" style="left:6.20px;top:7.50px;letter-spacing:0.479px;">CD Speed</span>
<span class="t tb" id="t1" style="left:74.20px;top:7.50px;">:</span>
<span class="t tb" id="t2" style="left:84.30px;top:7.50px;letter-spacing:0.481px;">Disc Quality</span>
<span class="t tb" id="t3" style="left:169.80px;top:7.50px;letter-spacing:0.600px;">Test</span>
<span class="t tb" id="t4" style="left:202.50px;top:7.50px;">-</span>
<span class="t tb" id="t5" style="left:216.30px;top:7.50px;letter-spacing:-0.733px;">BENQ</span>
<span class="t tb" id="t6" style="left:272.50px;top:7.50px;">DVD</span>
<span class="t tb" id="t7" style="left:304.50px;top:7.50px;letter-spacing:-1.800px;">DD</span>
<span class="t tb" id="t8" style="left:327.50px;top:7.50px;letter-spacing:0.240px;">DW1620</span>
<span class="t tb" id="t9" style="left:399.10px;top:7.50px;letter-spacing:0.423px;">B7V9</span>
<span class="t " id="t10" style="left:22.10px;top:36.50px;letter-spacing:0.084px;">Disc Quality</span>
<span class="t " id="t11" style="left:270.80px;top:56.00px;letter-spacing:-0.037px;">recorded with BENQ</span>
<span class="t " id="t12" style="left:392.10px;top:56.00px;letter-spacing:-0.344px;">DVD DD DW1620</span>
<span class="t " id="t13" style="left:496.10px;top:56.00px;letter-spacing:0.256px;">vB7V9</span>
<span class="t ax" id="t14" style="left:48.25px;top:170.50px;">4</span>
<span class="t ax" id="t15" style="left:48.25px;top:144.50px;">8</span>
<span class="t ax" id="t16" style="left:42.50px;top:118.50px;letter-spacing:-0.500px;">12</span>
<span class="t ax" id="t17" style="left:42.50px;top:92.50px;letter-spacing:-0.500px;">16</span>
<span class="t ax" id="t18" style="left:42.50px;top:65.30px;letter-spacing:-0.500px;">20</span>
<span class="t ax" id="t19" style="left:533.00px;top:180.12px;">2</span>
<span class="t ax" id="t20" style="left:533.00px;top:163.75px;">4</span>
<span class="t ax" id="t21" style="left:533.00px;top:147.38px;">6</span>
<span class="t ax" id="t22" style="left:533.00px;top:131.00px;">8</span>
<span class="t ax" id="t23" style="left:533.00px;top:114.62px;letter-spacing:-0.500px;">10</span>
<span class="t ax" id="t24" style="left:533.00px;top:98.25px;letter-spacing:-0.500px;">12</span>
<span class="t ax" id="t25" style="left:533.00px;top:81.88px;letter-spacing:-0.500px;">14</span>
<span class="t ax" id="t26" style="left:533.00px;top:65.50px;letter-spacing:-0.500px;">16</span>
<span class="t ax" id="t27" style="left:48.25px;top:320.50px;">2</span>
<span class="t ax" id="t28" style="left:533.00px;top:320.50px;">2</span>
<span class="t ax" id="t29" style="left:48.25px;top:294.50px;">4</span>
<span class="t ax" id="t30" style="left:533.00px;top:294.50px;">4</span>
<span class="t ax" id="t31" style="left:48.25px;top:268.50px;">6</span>
<span class="t ax" id="t32" style="left:533.00px;top:268.50px;">6</span>
<span class="t ax" id="t33" style="left:48.25px;top:242.50px;">8</span>
<span class="t ax" id="t34" style="left:533.00px;top:242.50px;">8</span>
<span class="t ax" id="t35" style="left:42.50px;top:215.20px;letter-spacing:-0.500px;">10</span>
<span class="t ax" id="t36" style="left:533.00px;top:215.20px;letter-spacing:-0.500px;">10</span>
<span class="t ax" id="t37" style="left:56.20px;top:204.50px;letter-spacing:-1.000px;">0.0</span>
<span class="t ax" id="t38" style="left:56.20px;top:355.00px;letter-spacing:-1.000px;">0.0</span>
<span class="t ax" id="t39" style="left:107.40px;top:204.50px;letter-spacing:-1.000px;">0.5</span>
<span class="t ax" id="t40" style="left:107.40px;top:355.00px;letter-spacing:-1.000px;">0.5</span>
<span class="t ax" id="t41" style="left:159.40px;top:204.50px;letter-spacing:-1.000px;">1.0</span>
<span class="t ax" id="t42" style="left:159.40px;top:355.00px;letter-spacing:-1.000px;">1.0</span>
<span class="t ax" id="t43" style="left:211.40px;top:204.50px;letter-spacing:-1.000px;">1.5</span>
<span class="t ax" id="t44" style="left:211.40px;top:355.00px;letter-spacing:-1.000px;">1.5</span>
<span class="t ax" id="t45" style="left:263.40px;top:204.50px;letter-spacing:-1.000px;">2.0</span>
<span class="t ax" id="t46" style="left:263.40px;top:355.00px;letter-spacing:-1.000px;">2.0</span>
<span class="t ax" id="t47" style="left:315.40px;top:204.50px;letter-spacing:-1.000px;">2.5</span>
<span class="t ax" id="t48" style="left:315.40px;top:355.00px;letter-spacing:-1.000px;">2.5</span>
<span class="t ax" id="t49" style="left:367.40px;top:204.50px;letter-spacing:-1.000px;">3.0</span>
<span class="t ax" id="t50" style="left:367.40px;top:355.00px;letter-spacing:-1.000px;">3.0</span>
<span class="t ax" id="t51" style="left:419.40px;top:204.50px;letter-spacing:-1.000px;">3.5</span>
<span class="t ax" id="t52" style="left:419.40px;top:355.00px;letter-spacing:-1.000px;">3.5</span>
<span class="t ax" id="t53" style="left:471.40px;top:204.50px;letter-spacing:-1.000px;">4.0</span>
<span class="t ax" id="t54" style="left:471.40px;top:355.00px;letter-spacing:-1.000px;">4.0</span>
<span class="t ax" id="t55" style="left:523.40px;top:204.50px;letter-spacing:-1.000px;">4.5</span>
<span class="t ax" id="t56" style="left:523.40px;top:355.00px;letter-spacing:-1.000px;">4.5</span>
<span class="t jp" id="t57" style="left:583.00px;top:59.70px;">開始</span>
<span class="t jp" id="t58" style="left:666.50px;top:59.70px;letter-spacing:0.688px;">終了(<u>X</u>)</span>
<span class="t jp blue" id="t59" style="left:568.40px;top:80.40px;transform:scaleX(0.837);">ディスク情報</span>
<span class="t jp" id="t60" style="left:569.20px;top:92.60px;transform:scaleX(0.726);">タイプ:</span>
<span class="t val" id="t61" style="left:616.50px;top:92.60px;letter-spacing:0.800px;">DVD-R</span>
<span class="t " id="t62" style="left:569.00px;top:107.70px;letter-spacing:-0.750px;">ID:</span>
<span class="t val" id="t63" style="left:616.50px;top:107.70px;letter-spacing:-0.656px;">TTG01</span>
<span class="t jp" id="t64" style="left:569.00px;top:122.50px;letter-spacing:-0.625px;">日付:</span>
<span class="t val" id="t65" style="left:616.50px;top:122.50px;letter-spacing:-0.178px;">31 May 2005</span>
<span class="t " id="t66" style="left:569.00px;top:138.00px;letter-spacing:-0.588px;">Label:</span>
<span class="t val" id="t67" style="left:616.50px;top:138.00px;letter-spacing:-0.733px;">CDS_TEST_B2</span>
<span class="t blue" id="t68" style="left:569.20px;top:153.00px;letter-spacing:0.184px;">Settings</span>
<span class="t jp" id="t69" style="left:568.00px;top:171.00px;letter-spacing:0.056px;">転送速度</span>
<span class="t jp" id="t70" style="left:633.50px;top:171.00px;letter-spacing:0.700px;">最大</span>
<span class="t jp" id="t71" style="left:568.00px;top:195.40px;letter-spacing:0.600px;">開始</span>
<span class="t " id="t72" style="left:633.50px;top:195.00px;letter-spacing:-0.208px;">0000 MB</span>
<span class="t jp" id="t73" style="left:568.00px;top:218.40px;letter-spacing:0.056px;">終了位置</span>
<span class="t " id="t74" style="left:633.50px;top:218.00px;letter-spacing:-0.208px;">4489 MB</span>
<span class="t " id="t75" style="left:584.40px;top:240.50px;letter-spacing:-0.100px;">Quick Scan</span>
<span class="t " id="t76" style="left:584.40px;top:259.00px;letter-spacing:-0.037px;">Show C1/PIE</span>
<span class="t " id="t77" style="left:584.40px;top:273.50px;letter-spacing:-0.026px;">Show C2/PIF</span>
<span class="t " id="t78" style="left:584.40px;top:289.50px;letter-spacing:0.178px;">Show Jitter</span>
<span class="t " id="t79" style="left:584.40px;top:304.60px;letter-spacing:-0.261px;">Show Read Speed</span>
<span class="t " id="t80" style="left:584.40px;top:319.60px;letter-spacing:-0.172px;">Show Write Speed</span>
<span class="t jp" id="t81" style="left:568.20px;top:347.80px;transform:scaleX(0.843);">品質スコア:</span>
<span class="t val" id="t82" style="left:694.00px;top:347.80px;letter-spacing:-0.500px;">94</span>
<span class="t jp" id="t83" style="left:568.00px;top:379.20px;letter-spacing:-0.137px;">進行状況:</span>
<span class="t val" id="t84" style="left:677.70px;top:379.20px;letter-spacing:-0.631px;">100 %</span>
<span class="t jp" id="t85" style="left:568.20px;top:398.80px;transform:scaleX(0.765);">ポジション:</span>
<span class="t val" id="t86" style="left:661.50px;top:398.80px;letter-spacing:-0.072px;">4488 MB</span>
<span class="t jp" id="t87" style="left:568.00px;top:417.10px;letter-spacing:-0.375px;">速度:</span>
<span class="t val" id="t88" style="left:676.20px;top:417.10px;letter-spacing:-0.108px;">8.34 X</span>
<span class="t " id="t89" style="left:40.20px;top:366.30px;letter-spacing:-0.168px;">PI Errors</span>
<span class="t jp" id="t90" style="left:26.70px;top:380.90px;letter-spacing:-0.500px;">平均:</span>
<span class="t val" id="t91" style="left:155.00px;top:380.90px;letter-spacing:-0.523px;">3.58</span>
<span class="t jp" id="t92" style="left:26.70px;top:398.80px;letter-spacing:-0.500px;">最大:</span>
<span class="t val" id="t93" style="left:162.70px;top:398.80px;letter-spacing:-0.900px;">14</span>
<span class="t jp" id="t94" style="left:26.70px;top:417.00px;letter-spacing:-0.423px;">合計 :</span>
<span class="t val" id="t95" style="left:145.30px;top:417.00px;letter-spacing:-0.288px;">36132</span>
<span class="t " id="t96" style="left:220.30px;top:366.30px;letter-spacing:-0.068px;">PI Failures</span>
<span class="t jp" id="t97" style="left:208.80px;top:380.90px;letter-spacing:-0.500px;">平均:</span>
<span class="t val" id="t98" style="left:337.20px;top:380.90px;letter-spacing:-0.733px;">0.09</span>
<span class="t jp" id="t99" style="left:208.80px;top:398.80px;letter-spacing:-0.500px;">最大:</span>
<span class="t val" id="t100" style="left:344.30px;top:398.80px;letter-spacing:-1.000px;">10</span>
<span class="t jp" id="t101" style="left:208.80px;top:417.00px;letter-spacing:-0.133px;">合計 :</span>
<span class="t val" id="t102" style="left:333.60px;top:417.00px;letter-spacing:-0.711px;">1087</span>
<span class="t " id="t103" style="left:401.50px;top:366.30px;letter-spacing:0.240px;">Jitter</span>
<span class="t jp" id="t104" style="left:388.80px;top:380.50px;letter-spacing:-0.500px;">平均:</span>
<span class="t val" id="t105" style="left:507.70px;top:380.50px;letter-spacing:-0.912px;">7.25 %</span>
<span class="t jp" id="t106" style="left:388.80px;top:398.90px;letter-spacing:-0.500px;">最大:</span>
<span class="t val" id="t107" style="left:512.80px;top:398.90px;letter-spacing:-0.881px;">8.8 %</span>
<span class="t " id="t108" style="left:389.30px;top:421.70px;letter-spacing:-0.221px;">PO Failures:</span>
<span class="t val" id="t109" style="left:531.50px;top:421.70px;">0</span>
</div></body></html>
